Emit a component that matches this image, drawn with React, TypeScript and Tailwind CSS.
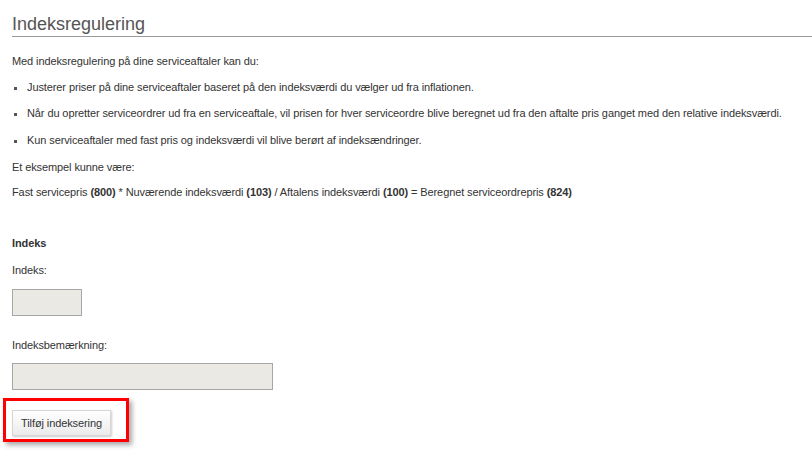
import React from "react";

const Bullet = ({ children }: { children: React.ReactNode }) => (
  <div className="flex items-center h-[13px]">
    <span className="w-[3px] h-[3px] bg-[#555] ml-[14px] mr-[10px] mt-[1px]" />
    <span>{children}</span>
  </div>
);

export default function App() {
  return (
    <div
      className="w-[812px] h-[469px] bg-white text-[#333] text-[11px] leading-[13px] tracking-[-0.1px] overflow-hidden"
      style={{ fontFamily: '"Liberation Sans", Arial, sans-serif' }}
    >
      <div className="pt-[13px] pl-[12px]">
        <h1 className="text-[18px] leading-[22px] tracking-[0px] text-[#555] pb-[1px] border-b border-[#9a9a9a]">
          Indeksregulering
        </h1>
      </div>
      <div className="px-[12px]">
        <p className="mt-[18px]">Med indeksregulering på dine serviceaftaler kan du:</p>
      </div>
      <div className="mt-[13px]">
        <Bullet>Justerer priser på dine serviceaftaler baseret på den indeksværdi du vælger ud fra inflationen.</Bullet>
        <div className="mt-[13px]">
          <Bullet>
            Når du opretter serviceordrer ud fra en serviceaftale, vil prisen for hver serviceordre blive beregnet ud fra den aftalte pris ganget med den relative indeksværdi.
          </Bullet>
        </div>
        <div className="mt-[14px]">
          <Bullet>Kun serviceaftaler med fast pris og indeksværdi vil blive berørt af indeksændringer.</Bullet>
        </div>
      </div>
      <div className="px-[12px]">
        <p className="mt-[14px]">Et eksempel kunne være:</p>
        <p className="mt-[12px]">
          Fast servicepris <b>(800)</b> * Nuværende indeksværdi <b>(103)</b> / Aftalens indeksværdi <b>(100)</b> = Beregnet serviceordrepris <b>(824)</b>
        </p>
        <p className="mt-[38px] font-bold">Indeks</p>
        <p className="mt-[14px]">Indeks:</p>
        <div className="mt-[12px] w-[70px] h-[27px] bg-[#eae9e3] border border-[#a6a6a6]" />
        <p className="mt-[23px]">Indeksbemærkning:</p>
        <div className="mt-[11px] w-[261px] h-[27px] bg-[#eae9e3] border border-[#a6a6a6]" />
      </div>
      <div className="pl-[3px] mt-[8px]">
        <div className="inline-block border-[3px] border-[#ff0000] pt-[9px] pl-[6px] pr-[15px] pb-[3px] shadow-[3px_3px_5px_rgba(0,0,0,0.35)]">
          <button className="w-[99px] h-[26px] border border-[#d6d6d6] bg-gradient-to-b from-[#ffffff] to-[#ebebeb] text-[11px] text-[#333] shadow-[1px_1px_2px_rgba(0,0,0,0.2)] block">
            Tilføj indeksering
          </button>
        </div>
      </div>
    </div>
  );
}
